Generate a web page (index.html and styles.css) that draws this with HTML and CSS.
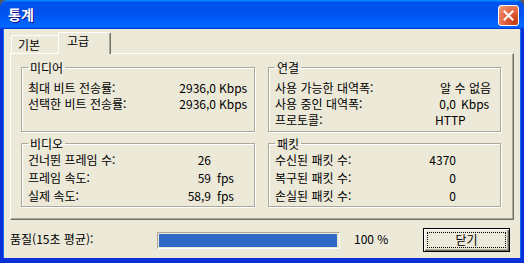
FILE: index.html
```html
<!DOCTYPE html>
<html lang="ko">
<head>
    <meta charset="UTF-8">
    <title>통계</title>
    <link rel="stylesheet" href="styles.css">
</head>
<body>
    <div class="window">
        <div class="titlebar">
            <span class="title">통계</span>
            <span class="close">
                <svg width="11" height="11" viewBox="0 0 11 11"><path d="M1.5 1.5L9.5 9.5M9.5 1.5L1.5 9.5" stroke="#fff" stroke-width="2" stroke-linecap="square"/></svg>
            </span>
        </div>
        <div class="client">
            <div class="tabs">
                <div class="tab">기본</div>
                <div class="tab active">고급</div>
            </div>
            <div class="panel">
                <fieldset class="group top media">
                    <legend>미디어</legend>
                    <div class="row"><span class="lbl">최대 비트 전송률:</span><span class="num">2936,0</span><span class="unit">Kbps</span></div>
                    <div class="row"><span class="lbl">선택한 비트 전송률:</span><span class="num">2936,0</span><span class="unit">Kbps</span></div>
                </fieldset>
                <fieldset class="group top link">
                    <legend>연결</legend>
                    <div class="row"><span class="lbl">사용 가능한 대역폭:</span><span class="val">알 수 없음</span></div>
                    <div class="row"><span class="lbl">사용 중인 대역폭:</span><span class="num">0,0</span><span class="unit">Kbps</span></div>
                    <div class="row"><span class="lbl">프로토콜:</span><span class="val proto">HTTP</span></div>
                </fieldset>
                <fieldset class="group bottom video">
                    <legend>비디오</legend>
                    <div class="row"><span class="lbl">건너뛴 프레임 수:</span><span class="num">26</span><span class="unit"></span></div>
                    <div class="row"><span class="lbl">프레임 속도:</span><span class="num">59</span><span class="unit">fps</span></div>
                    <div class="row"><span class="lbl">실제 속도:</span><span class="num">58,9</span><span class="unit">fps</span></div>
                </fieldset>
                <fieldset class="group bottom packet">
                    <legend>패킷</legend>
                    <div class="row"><span class="lbl">수신된 패킷 수:</span><span class="num">4370</span><span class="unit"></span></div>
                    <div class="row"><span class="lbl">복구된 패킷 수:</span><span class="num">0</span><span class="unit"></span></div>
                    <div class="row"><span class="lbl">손실된 패킷 수:</span><span class="num">0</span><span class="unit"></span></div>
                </fieldset>
            </div>
            <div class="footer">
                <span class="quality">품질(15초 평균):</span>
                <div class="progress"><div class="fill" style="width: 100%"></div></div>
                <span class="pct">100 %</span>
                <div class="btn"><span class="focus">닫기</span></div>
            </div>
        </div>
    </div>
</body>
</html>
```

FILE: styles.css
```css
html, body {
    margin: 0;
    padding: 0;
    background: #5a5a5a;
}
body {
    font-family: "Noto Sans CJK KR", "Noto Sans", sans-serif;
    font-size: 12px;
    color: #000;
}
.window {
    width: 524px;
    height: 263px;
    display: flex;
    flex-direction: column;
}
.titlebar {
    height: 29px;
    flex: none;
    display: flex;
    align-items: center;
    justify-content: space-between;
    padding: 0 5px 0 8px;
    box-sizing: border-box;
    border-radius: 7px 7px 0 0;
    background: linear-gradient(180deg, #0997ff, #0053ee 8%, #0050ee 40%, #0066ff 88%, #0066ff 93%, #005bff 95%, #003dd7 96%, #003dd7);
}
.title {
    color: #fff;
    font-weight: bold;
    font-size: 14px;
    line-height: 16px;
    text-shadow: 1px 1px #0f1089;
    margin-top: -1px;
}
.close {
    width: 21px;
    height: 21px;
    box-sizing: border-box;
    border: 1px solid #fff;
    border-radius: 3px;
    background: radial-gradient(circle at 85% 85%, #c23a12 0%, #e2613d 45%, #eb8d6f 85%, #f4b9a4 100%);
    display: flex;
    align-items: center;
    justify-content: center;
    margin-top: 1px;
}
.client {
    flex: 1;
    background: #ece9d8;
    border-left: 3px solid #0831d9;
    border-right: 3px solid #0831d9;
    border-bottom: 5px solid #0831d9;
    box-shadow: inset 1px 0 #166aee, inset -1px 0 #166aee;
}

/* tabs */
.tabs {
    display: flex;
    align-items: flex-end;
    padding: 3px 0 0 8px;
    height: 24px;
    box-sizing: border-box;
}
.tab {
    height: 18px;
    width: 49px;
    box-sizing: border-box;
    padding-left: 6px;
    line-height: 17px;
    border-top: 1px solid #fff;
    border-left: 1px solid #fff;
    border-right: 1px solid #716f64;
    border-radius: 2px 2px 0 0;
    box-shadow: inset -1px 0 #aca899;
    background: #ece9d8;
}
.tab.active {
    position: relative;
    height: 22px;
    width: 53px;
    margin-left: -2px;
    margin-bottom: -1px;
    padding-left: 8px;
    line-height: 16px;
}

/* tab page */
.panel {
    margin-left: 7px;
    width: 504px;
    height: 167px;
    box-sizing: border-box;
    border: 1px solid;
    border-color: #fff #716f64 #716f64 #fff;
    box-shadow: inset -1px -1px #aca899;
    padding: 7px 0 0 10px;
    display: grid;
    grid-template-columns: 234px 233px;
    grid-template-rows: 71px 70px;
    column-gap: 13px;
    row-gap: 5px;
}
.group {
    margin: 0;
    min-width: 0;
    box-sizing: border-box;
    border: 1px solid #aca899;
    box-shadow: inset 1px 1px #fff, 1px 1px #fff;
    padding: 6px 8px 3px 6px;
}
.group legend {
    padding: 0 2px;
    line-height: 13px;
}
.group.bottom {
    padding-top: 1px;
    padding-bottom: 1px;
}
.row {
    display: flex;
    line-height: 16px;
    white-space: nowrap;
}
.group.bottom .row {
    line-height: 18px;
}
.lbl {
    flex: 1;
}
.num, .val {
    text-align: right;
}
.unit {
    box-sizing: border-box;
}
.media .unit {
    width: 30px;
    padding-left: 3px;
}
.video .unit {
    width: 35px;
    padding-left: 6px;
}
.link, .packet {
    padding-right: 9px;
}
.link .unit, .packet .unit {
    width: 35px;
    padding-left: 5px;
}
.val.proto {
    width: 56px;
    text-align: left;
}

/* bottom row */
.footer {
    display: flex;
    align-items: center;
    margin-top: 8px;
    padding-left: 7px;
    height: 24px;
}
.quality {
    width: 147px;
    margin-top: -3px;
}
.progress {
    width: 183px;
    height: 17px;
    box-sizing: border-box;
    border: 1px solid;
    border-color: #aca899 #fff #fff #aca899;
    padding: 1px 2px 1px 1px;
}
.fill {
    height: 100%;
    background: #316ac5;
}
.pct {
    width: 69px;
    margin-left: 14px;
    margin-top: -3px;
}
.btn {
    width: 87px;
    height: 24px;
    box-sizing: border-box;
    border: 1px solid #000;
    box-shadow: inset 1px 1px #fff, inset -1px -1px #716f64, inset -2px -2px #aca899;
    padding: 3px;
    display: flex;
}
.focus {
    flex: 1;
    border: 1px dotted #000;
    display: flex;
    align-items: center;
    justify-content: center;
    line-height: 14px;
}
```
